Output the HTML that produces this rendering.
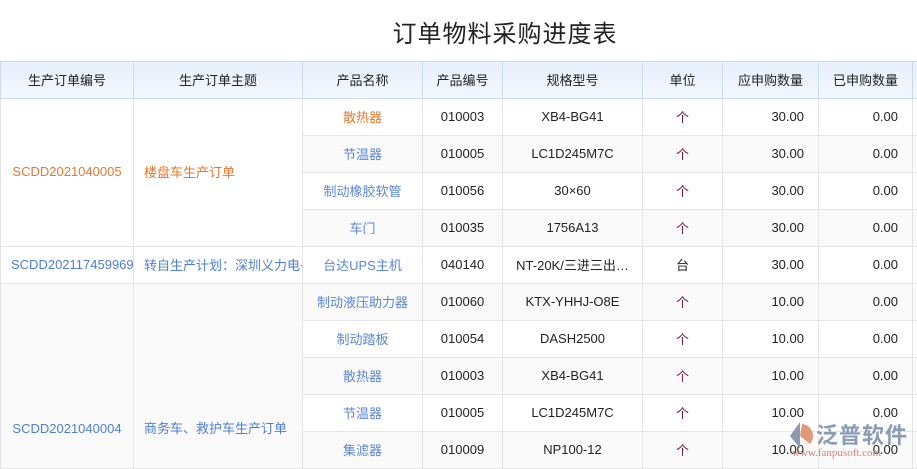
<!DOCTYPE html><html><head><meta charset="utf-8"><style>
body{margin:0;width:917px;height:467px;overflow:hidden;background:#fff;font-family:"Liberation Sans","Noto Sans CJK SC",sans-serif;position:relative}
h1{position:absolute;top:14px;left:0;width:1010px;margin:0;text-align:center;font-size:24px;font-weight:normal;color:#222;letter-spacing:1px}
table{position:absolute;top:61px;left:0;width:932px;border-collapse:collapse;table-layout:fixed;font-size:13px;color:#222}
td,th{border:1px solid #e4e4e4;height:34px;padding:0 0 2px 0;text-align:center;white-space:nowrap;overflow:hidden}
th{font-weight:normal;background:linear-gradient(#e6effb,#f4f8fe);border-color:#c9dbf0;color:#222}
.o{color:#e8772e}.b{color:#4d7fd6}.p{color:#5a86d8}
td.r{text-align:right;padding-right:14px}
tr.g td.s{background:#fafafa}
.u{color:#7a1a40}
.wm{position:absolute;left:786px;top:418px;font-size:22px;color:#8a9bb3;font-weight:bold;letter-spacing:1px}
.wm2{position:absolute;left:792px;top:447px;font-size:11px;color:#d88070;font-family:"Liberation Serif",serif}
</style></head><body>
<h1>订单物料采购进度表</h1>
<table>
<colgroup><col style="width:133px"><col style="width:169px"><col style="width:120px"><col style="width:80px"><col style="width:140px"><col style="width:80px"><col style="width:96px"><col style="width:94px"><col style="width:20px"></colgroup>
<tr><th>生产订单编号</th><th>生产订单主题</th><th>产品名称</th><th>产品编号</th><th>规格型号</th><th>单位</th><th>应申购数量</th><th>已申购数量</th><th></th></tr>
<tr><td rowspan="4" class="o">SCDD2021040005</td><td rowspan="4" class="o" style="text-align:left;padding-left:10px">楼盘车生产订单</td><td class="o">散热器</td><td>010003</td><td>XB4-BG41</td><td class="u">个</td><td class="r">30.00</td><td class="r">0.00</td><td></td></tr>
<tr class="g"><td class="p s">节温器</td><td class="s">010005</td><td class="s">LC1D245M7C</td><td class="s u">个</td><td class="r s">30.00</td><td class="r s">0.00</td><td class="s"></td></tr>
<tr><td class="p">制动橡胶软管</td><td>010056</td><td>30×60</td><td class="u">个</td><td class="r">30.00</td><td class="r">0.00</td><td></td></tr>
<tr class="g"><td class="p s">车门</td><td class="s">010035</td><td class="s">1756A13</td><td class="s u">个</td><td class="r s">30.00</td><td class="r s">0.00</td><td class="s"></td></tr>
<tr><td class="b" style="text-align:left;padding-left:10px">SCDD202117459969</td><td class="b" style="text-align:left;padding-left:10px">转自生产计划：深圳义力电子</td><td class="p">台达UPS主机</td><td>040140</td><td>NT-20K/三进三出…</td><td>台</td><td class="r">30.00</td><td class="r">0.00</td><td></td></tr>
<tr class="g"><td rowspan="5" class="b s" style="vertical-align:bottom;padding-bottom:21px;line-height:36px">SCDD2021040004</td><td rowspan="5" class="b s" style="vertical-align:bottom;text-align:left;padding-left:10px;padding-bottom:21px;line-height:36px">商务车、救护车生产订单</td><td class="p s">制动液压助力器</td><td class="s">010060</td><td class="s">KTX-YHHJ-O8E</td><td class="s u">个</td><td class="r s">10.00</td><td class="r s">0.00</td><td class="s"></td></tr>
<tr><td class="p">制动踏板</td><td>010054</td><td>DASH2500</td><td class="u">个</td><td class="r">10.00</td><td class="r">0.00</td><td></td></tr>
<tr class="g"><td class="p s">散热器</td><td class="s">010003</td><td class="s">XB4-BG41</td><td class="s u">个</td><td class="r s">10.00</td><td class="r s">0.00</td><td class="s"></td></tr>
<tr><td class="p">节温器</td><td>010005</td><td>LC1D245M7C</td><td class="u">个</td><td class="r">10.00</td><td class="r">0.00</td><td></td></tr>
<tr class="g"><td class="p s">集滤器</td><td class="s">010009</td><td class="s">NP100-12</td><td class="s u">个</td><td class="r s">10.00</td><td class="r s">0.00</td><td class="s"></td></tr>
</table>
<svg style="position:absolute;left:786px;top:420px" width="28" height="30"><path d="M14 2 L4 16 L14 28 Z" fill="#8a9bb3"/><path d="M16 4 A12 12 0 0 1 24 24 L14 16 Z" fill="#e09a7a"/></svg>
<div class="wm" style="left:816px">泛普软件</div>
<div class="wm2">www.fanpusoft.com</div>
</body></html>
